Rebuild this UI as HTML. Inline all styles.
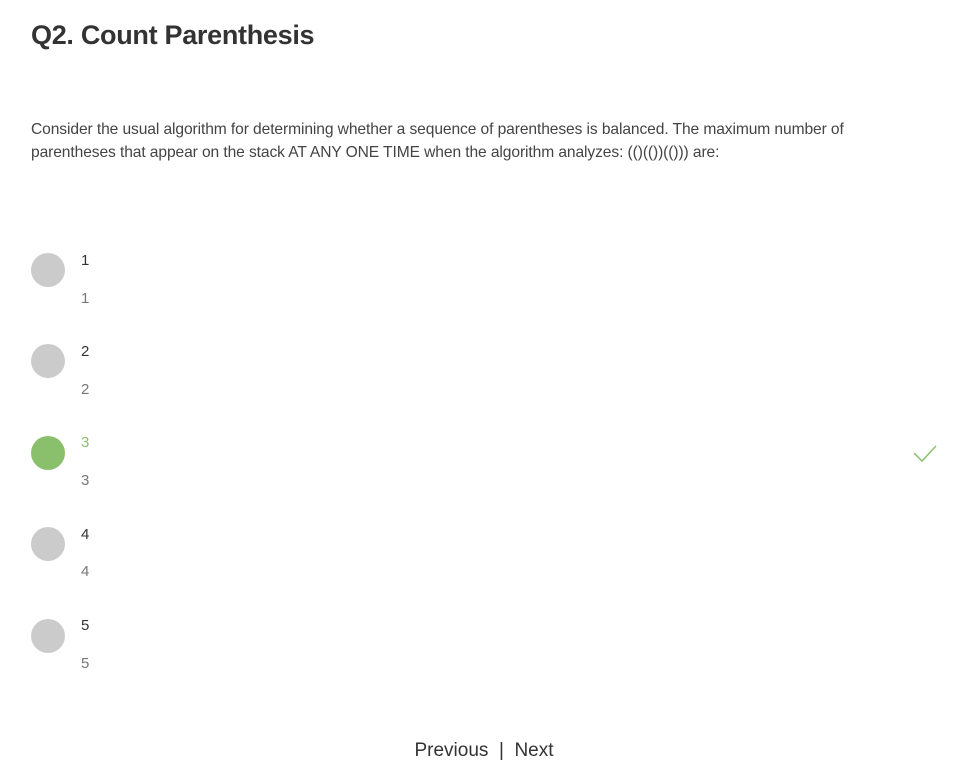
<!DOCTYPE html>
<html><head><style>
body{margin:0;background:#fff;font-family:"Liberation Sans",sans-serif;width:968px;height:778px;position:relative;overflow:hidden}
h1{position:absolute;left:31px;top:20px;margin:0;font-size:27px;font-weight:bold;color:#333;letter-spacing:-0.3px}
.q{position:absolute;left:31px;top:118px;width:880px;font-size:15.6px;line-height:23px;color:#444;letter-spacing:-0.1px}
.c{position:absolute;left:31px;width:34px;height:34px;border-radius:50%;background:#cbcbcb}
.l{position:absolute;left:81px;font-size:15px;color:#333}
.s{position:absolute;left:81px;font-size:15px;color:#777}
.nav{position:absolute;left:0;width:968px;top:740px;text-align:center;font-size:19px;color:#333}
</style></head><body>
<h1>Q2. Count Parenthesis</h1>
<div class="q">Consider the usual algorithm for determining whether a sequence of parentheses is balanced. The maximum number of<br>parentheses that appear on the stack AT ANY ONE TIME when the algorithm analyzes: (()(())(())) are:</div>

<div class="c" style="top:253px"></div><div class="l" style="top:252px">1</div><div class="s" style="top:290px">1</div>
<div class="c" style="top:344px"></div><div class="l" style="top:343px">2</div><div class="s" style="top:381px">2</div>
<div class="c" style="top:436px;background:#8abf6c"></div><div class="l" style="top:434px;color:#8abf6c">3</div><div class="s" style="top:472px">3</div>
<div class="c" style="top:527px"></div><div class="l" style="top:526px">4</div><div class="s" style="top:563px">4</div>
<div class="c" style="top:619px"></div><div class="l" style="top:617px">5</div><div class="s" style="top:655px">5</div>

<svg style="position:absolute;left:910px;top:440px" width="30" height="24"><path d="M4 13 L12 21 L26 6" fill="none" stroke="#8abf6c" stroke-width="1.5"/></svg>

<div class="nav">Previous &nbsp;|&nbsp; Next</div>
</body></html>
